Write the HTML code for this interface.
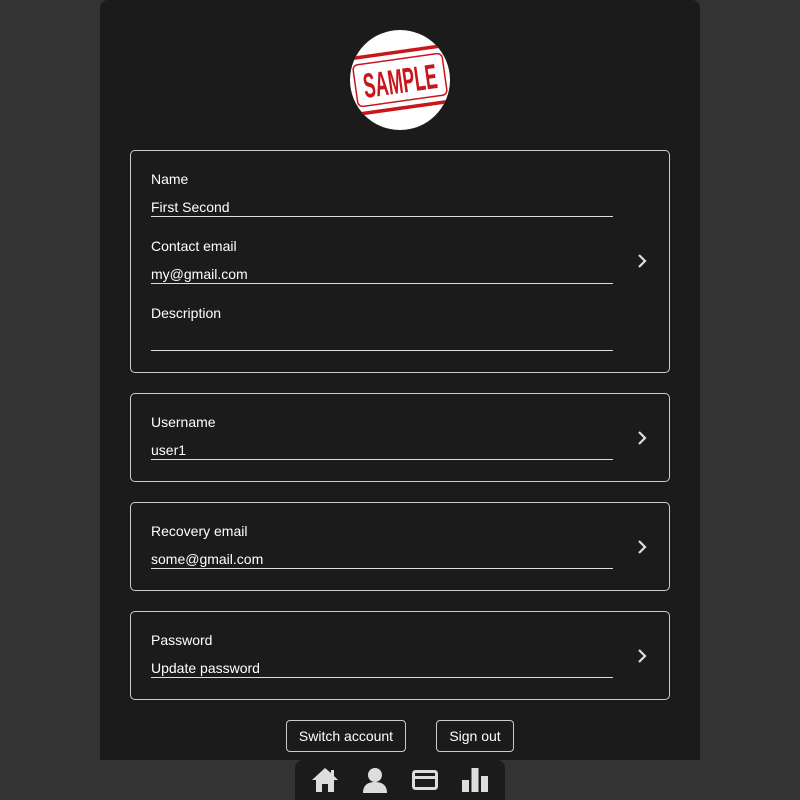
<!DOCTYPE html>
<html><head><style>
*{margin:0;padding:0;box-sizing:border-box}
body{width:800px;height:800px;background:#333;font-family:"Liberation Sans",sans-serif;color:#fff;position:relative;overflow:hidden}
.card{position:absolute;left:100px;top:0;width:600px;height:760px;background:#1b1b1b;border-radius:8px 8px 0 0}
.box{position:absolute;left:130px;width:540px;border:1px solid #ccc;border-radius:5px}
.lbl{position:absolute;left:151px;font-size:14px;line-height:16px}
.val{position:absolute;left:151px;width:462px;font-size:14px;line-height:18px;border-bottom:1px solid #ddd;height:19px}
.chev{position:absolute;left:634px;width:16px;height:16px}
.btn{position:absolute;top:720px;height:32px;border:1px solid #ccc;border-radius:4px;font-size:14px;line-height:30px;text-align:center}
.nav{position:absolute;left:295px;top:760px;width:210px;height:40px;background:#1b1b1b;border-radius:8px 8px 0 0}
</style></head><body>
<div class="card"></div>
<svg style="position:absolute;left:350px;top:30px" width="100" height="100" viewBox="0 0 100 100">
<defs><clipPath id="c"><circle cx="50" cy="50" r="50"/></clipPath></defs>
<circle cx="50" cy="50" r="50" fill="#fff"/>
<g clip-path="url(#c)" transform="rotate(-8 50 50)">
<rect x="-2" y="22" width="104" height="56" rx="7" fill="none" stroke="#c8161d" stroke-width="3.5"/>
<rect x="5" y="29" width="90" height="42" rx="5" fill="none" stroke="#c8161d" stroke-width="1.5"/>
<g transform="translate(50 63) scale(1 1.45)">
<text x="0" y="0" text-anchor="middle" font-family="Liberation Sans" font-weight="bold" font-size="24" fill="#c8161d" textLength="74" lengthAdjust="spacingAndGlyphs">SAMPLE</text>
</g>
</g></svg>
<div class="box" style="top:150px;height:223px"></div>
<div class="lbl" style="top:171px">Name</div>
<div class="val" style="top:198px">First Second</div>
<div class="lbl" style="top:238px">Contact email</div>
<div class="val" style="top:265px">my@gmail.com</div>
<div class="lbl" style="top:305px">Description</div>
<div class="val" style="top:332px"></div>
<svg class="chev" style="top:253px" viewBox="0 0 16 16"><path d="M5 2l6 6-6 6" fill="none" stroke="#ddd" stroke-width="2.2"/></svg>

<div class="box" style="top:393px;height:89px"></div>
<div class="lbl" style="top:414px">Username</div>
<div class="val" style="top:441px">user1</div>
<svg class="chev" style="top:430px" viewBox="0 0 16 16"><path d="M5 2l6 6-6 6" fill="none" stroke="#ddd" stroke-width="2.2"/></svg>

<div class="box" style="top:502px;height:89px"></div>
<div class="lbl" style="top:523px">Recovery email</div>
<div class="val" style="top:550px">some@gmail.com</div>
<svg class="chev" style="top:539px" viewBox="0 0 16 16"><path d="M5 2l6 6-6 6" fill="none" stroke="#ddd" stroke-width="2.2"/></svg>

<div class="box" style="top:611px;height:89px"></div>
<div class="lbl" style="top:632px">Password</div>
<div class="val" style="top:659px">Update password</div>
<svg class="chev" style="top:648px" viewBox="0 0 16 16"><path d="M5 2l6 6-6 6" fill="none" stroke="#ddd" stroke-width="2.2"/></svg>

<div class="btn" style="left:286px;width:120px">Switch account</div>
<div class="btn" style="left:436px;width:78px">Sign out</div>

<div class="nav"></div>
<svg style="position:absolute;left:311px;top:766px" width="28" height="28" viewBox="0 0 28 28"><path d="M14 2L1 14h4v12h6v-8h6v8h6V14h4L23 10V4h-3v3z" fill="#ddd"/></svg>
<svg style="position:absolute;left:361px;top:766px" width="28" height="28" viewBox="0 0 28 28"><circle cx="14" cy="9" r="7" fill="#ddd"/><path d="M2 27c0-8 5-11 12-11s12 3 12 11z" fill="#ddd"/></svg>
<svg style="position:absolute;left:411px;top:766px" width="28" height="28" viewBox="0 0 28 28"><rect x="2.5" y="5.5" width="23" height="17" rx="2" fill="none" stroke="#ddd" stroke-width="3"/><rect x="3" y="10" width="22" height="3" fill="#ddd"/></svg>
<svg style="position:absolute;left:461px;top:766px" width="28" height="28" viewBox="0 0 28 28"><rect x="1" y="14" width="7" height="12" fill="#ddd"/><rect x="10.5" y="2" width="7" height="24" fill="#ddd"/><rect x="20" y="10" width="7" height="16" fill="#ddd"/></svg>
</body></html>
